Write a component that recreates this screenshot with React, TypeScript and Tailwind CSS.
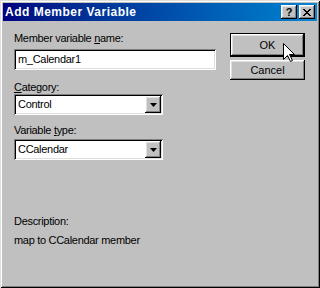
const raised =
  'shadow-[inset_-1px_-1px_#000,inset_1px_1px_#fff,inset_-2px_-2px_#808080,inset_2px_2px_#dfdfdf]'
const sunken =
  'shadow-[inset_1px_1px_#808080,inset_-1px_-1px_#fff,inset_2px_2px_#000,inset_-2px_-2px_#dfdfdf]'

function DropArrow() {
  return (
    <div className={`flex h-[17px] w-[16px] items-center justify-center bg-[#c0c0c0] ${raised}`}>
      <svg width="7" height="4" viewBox="0 0 7 4">
        <path d="M0 0h7L3.5 4z" fill="#000" />
      </svg>
    </div>
  )
}

function Combo({ value }: { value: string }) {
  return (
    <div className={`flex h-[21px] w-[149px] items-center bg-white p-[2px] ${sunken}`}>
      <span className="flex-1 pl-[2px] text-[11px] leading-none tracking-[-0.3px] text-black">{value}</span>
      <DropArrow />
    </div>
  )
}

function Label({ children }: { children: React.ReactNode }) {
  return <p className="text-[11px] leading-[13px] tracking-[-0.3px] text-black">{children}</p>
}

export default function App() {
  return (
    <div
      className="flex h-[288px] w-[320px] flex-col bg-[#c0c0c0] p-[3px] shadow-[inset_1px_1px_#dfdfdf,inset_-1px_-1px_#000,inset_2px_2px_#fff,inset_-2px_-2px_#808080]"
      style={{ fontFamily: '"Liberation Sans", Arial, sans-serif' }}
    >
      <div className="flex h-[18px] items-center bg-gradient-to-r from-[#000080] to-[#1084d0] pl-[2px] pr-[2px]">
        <span className="flex-1 text-[12px] font-bold tracking-[0.5px] text-white">Add Member Variable</span>
        <div className="flex">
          <div className={`flex h-[14px] w-[16px] items-center justify-center bg-[#c0c0c0] text-[11px] font-bold leading-none text-black ${raised}`}>
            ?
          </div>
          <div className={`ml-[2px] flex h-[14px] w-[16px] items-center justify-center bg-[#c0c0c0] ${raised}`}>
            <svg width="8" height="7" viewBox="0 0 8 7">
              <path d="M0 0L7 7M1 0L8 7M7 0L0 7M8 0L1 7" stroke="#000" strokeWidth="1" />
            </svg>
          </div>
        </div>
      </div>

      <div className="flex flex-1 pl-[11px] pt-[11px]">
        <div className="flex w-[202px] flex-col">
          <Label>
            Member variable <u>n</u>ame:
          </Label>
          <div className={`mt-[4px] flex h-[21px] items-center bg-white px-[4px] ${sunken}`}>
            <span className="text-[11px] leading-none tracking-[-0.3px] text-black">m_Calendar1</span>
          </div>
          <div className="mt-[11px]">
            <Label>
              <u>C</u>ategory:
            </Label>
          </div>
          <div>
            <Combo value="Control" />
          </div>
          <div className="mt-[9px]">
            <Label>
              Variable <u>t</u>ype:
            </Label>
          </div>
          <div className="mt-[2px]">
            <Combo value="CCalendar" />
          </div>
          <div className="mt-[55px]">
            <Label>Description:</Label>
          </div>
          <div className="mt-[6px]">
            <Label>map to CCalendar member</Label>
          </div>
        </div>

        <div className="ml-[14px] flex flex-col gap-[3px] pt-[1px]">
          <div className="relative flex h-[24px] w-[75px] items-center justify-center border border-black bg-[#c0c0c0]">
            <div className={`absolute inset-0 ${raised}`} />
            <span className="relative text-[11px] text-black">OK</span>
            <svg className="absolute left-[52px] top-[9px]" width="12" height="19" viewBox="0 0 12 19">
              <path d="M0.5 0.5V16.5L4.5 12.5L7.5 18.5L9.5 17.5L6.5 11.5H11.5Z" fill="#fff" stroke="#000" />
            </svg>
          </div>
          <div className={`flex h-[20px] w-[75px] items-center justify-center bg-[#c0c0c0] ${raised}`}>
            <span className="text-[11px] text-black">Cancel</span>
          </div>
        </div>
      </div>
    </div>
  )
}
